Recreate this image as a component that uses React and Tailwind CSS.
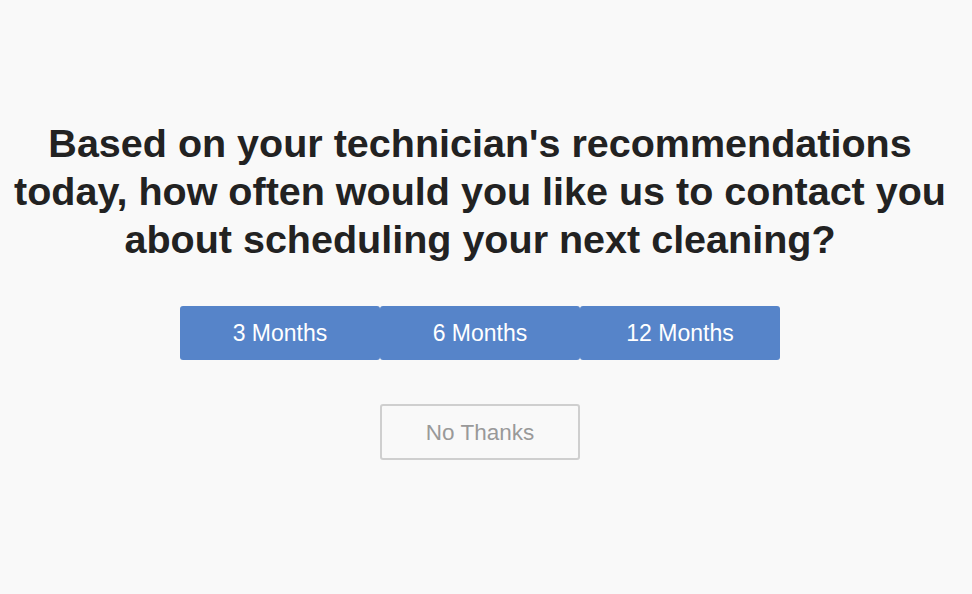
export default function App() {
  const options = ['3 Months', '6 Months', '12 Months']

  return (
    <div className="min-h-[594px] bg-[#f9f9f9] pr-[12px] font-['Liberation_Sans',Arial,sans-serif]">
      <div className="flex flex-col items-center px-2 pt-[119px]">
        <h1 className="text-center text-[39.5px] font-bold leading-[48px] text-[#222]">
          Based on your technician's recommendations today, how often would you like us to contact you about scheduling your next cleaning?
        </h1>

        <div className="mt-[43px] flex">
          {options.map((label) => (
            <button
              key={label}
              type="button"
              className="h-[54px] w-[200px] rounded-[3px] bg-[#5684c9] pt-px text-[23px] text-white"
            >
              {label}
            </button>
          ))}
        </div>

        <button
          type="button"
          className="mt-[44px] h-[56px] w-[200px] rounded-[3px] border-2 border-[#cfcfcf] bg-[#f9f9f9] pt-px text-[22.5px] text-[#999]"
        >
          No Thanks
        </button>
      </div>
    </div>
  )
}
